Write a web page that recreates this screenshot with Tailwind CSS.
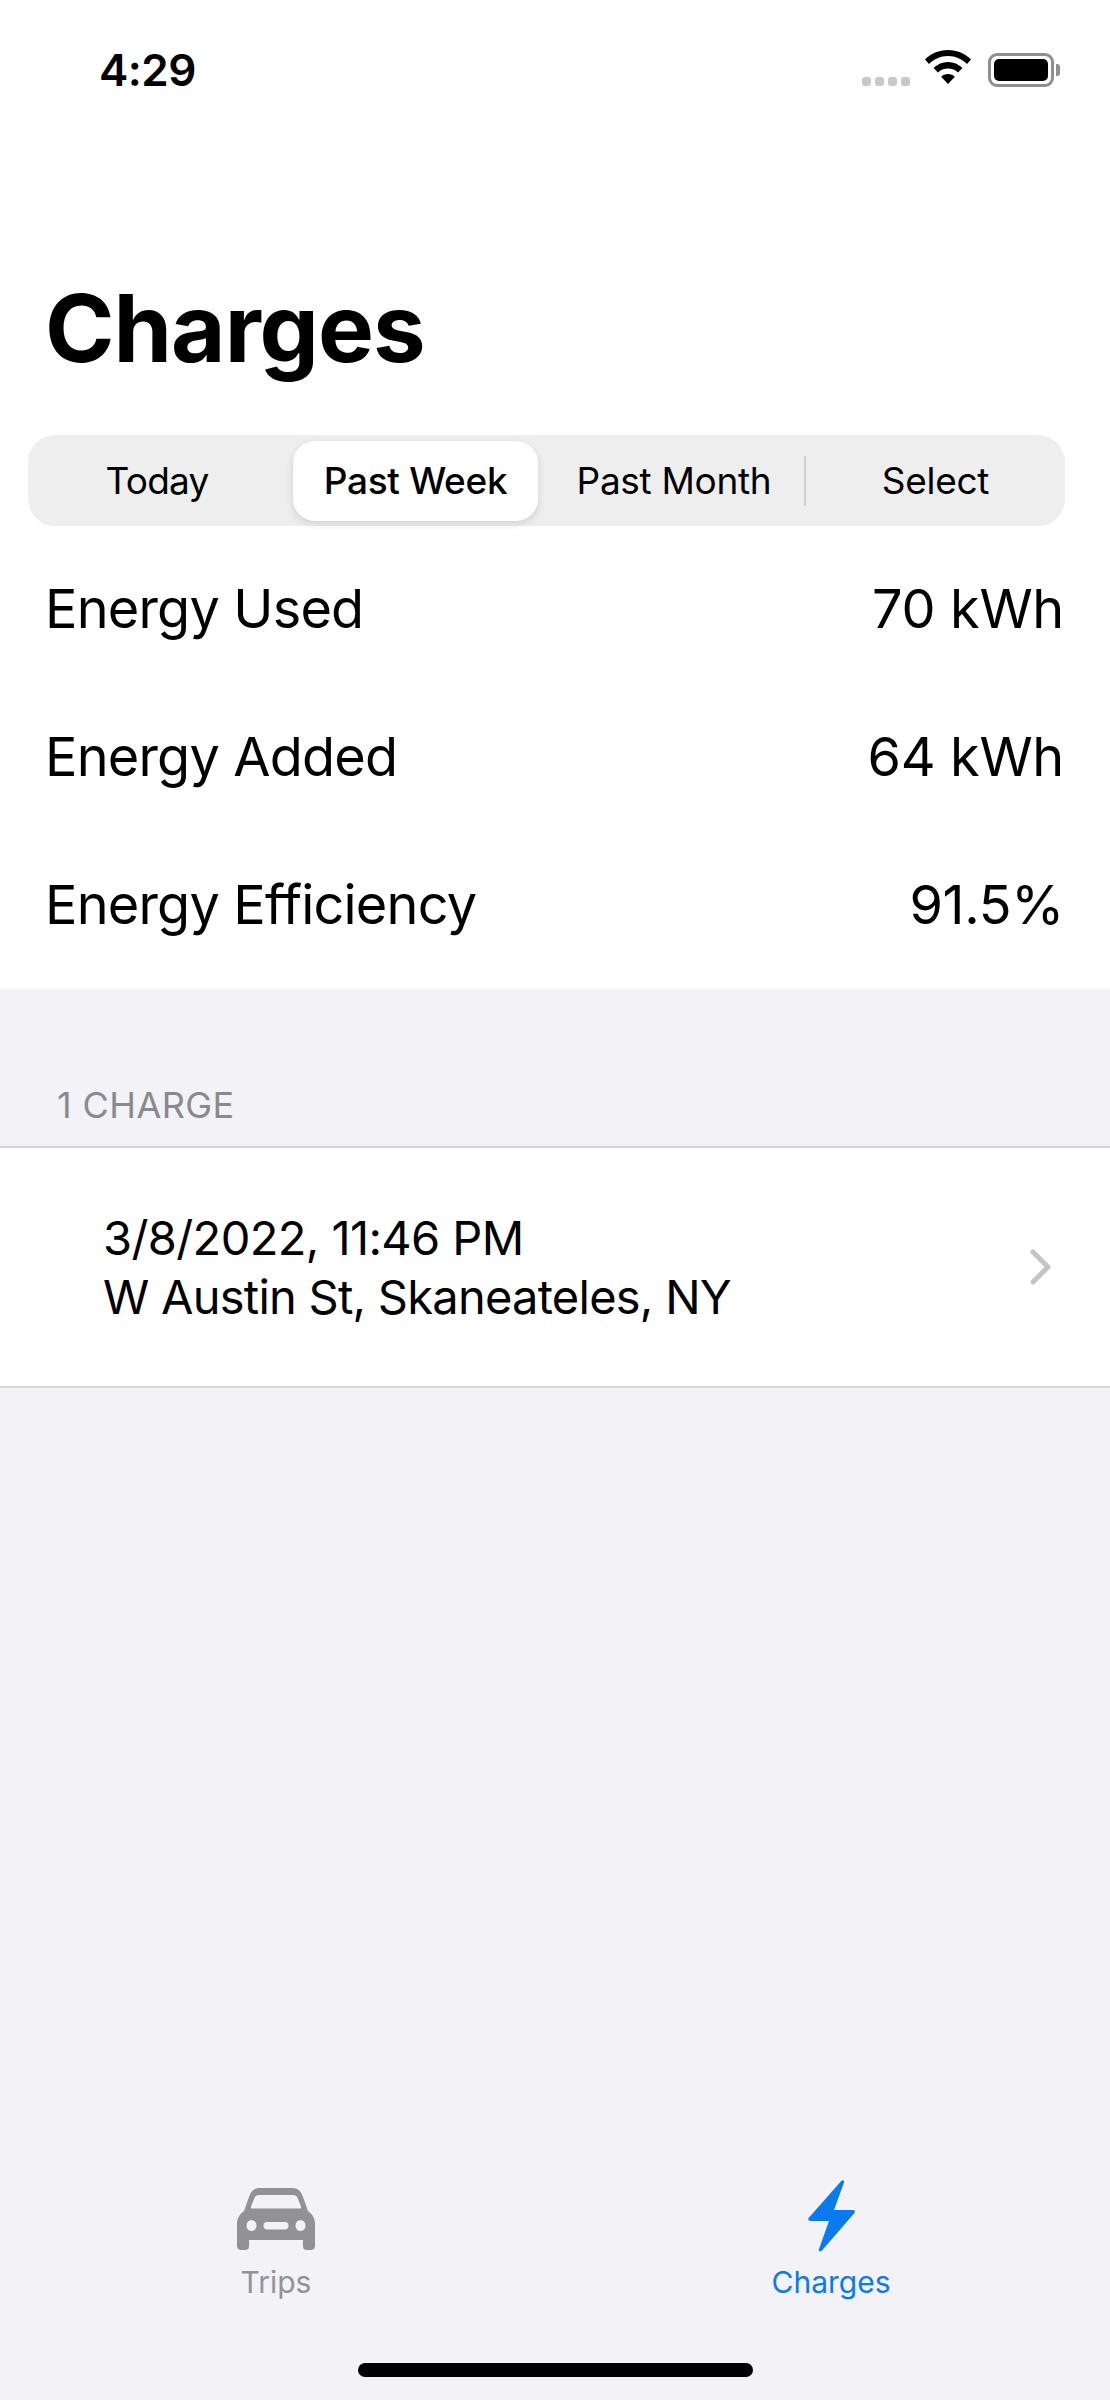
<!DOCTYPE html>
<html lang="en">
<head>
    <meta charset="UTF-8">
    <meta name="viewport" content="width=device-width, initial-scale=1.0">
    <title>Charges</title>
    <script src="https://cdn.jsdelivr.net/npm/@tailwindcss/browser@4"></script>
</head>
<body class="bg-white font-['Inter',sans-serif] text-black">
    <div class="w-[1110px] h-[2400px] flex flex-col overflow-hidden bg-[#f2f2f7]">
        <div class="bg-white">
            <!-- Status bar -->
            <div class="h-[140px] flex justify-between items-start pl-[99px] pr-[50px]">
                <span class="mt-[43px] text-[44px] leading-[54px] font-semibold tracking-[-0.5px]">4:29</span>
                <div class="mt-[50px] flex items-end">
                    <div class="flex gap-[4px] mb-[1px] mr-[14px]">
                        <span class="w-[9px] h-[9px] rounded-[3px] bg-[#c8c8c8]"></span>
                        <span class="w-[9px] h-[9px] rounded-[3px] bg-[#c8c8c8]"></span>
                        <span class="w-[9px] h-[9px] rounded-[3px] bg-[#c8c8c8]"></span>
                        <span class="w-[9px] h-[9px] rounded-[3px] bg-[#c8c8c8]"></span>
                    </div>
                    <svg class="w-[48px] h-[36px] mr-[16px] mb-[1px]" viewBox="0 0 48 36">
                        <path d="M24 0C15 0 7 3.500 1 9.500L5 14C10 9 16.500 6 24 6s14 3 19 8l4-4.500C41 3.500 33 0 24 0z"/>
                        <path d="M24 12c-5.500 0-10.500 2.200-14.500 6L14 22.500c2.600-2.600 6-4 10-4s7.400 1.400 10 4l4.500-4.500C34.500 14.200 29.500 12 24 12z"/>
                        <path d="M24 24c-2.800 0-5 1-6.800 2.800L24 34l6.800-7.200C29 25 26.800 24 24 24z"/>
                    </svg>
                    <div class="w-[66px] h-[34px] rounded-[9px] border-[3px] border-[#8f8f8f] p-[3px]">
                        <div class="w-full h-full rounded-[5px] bg-black"></div>
                    </div>
                    <span class="w-[4px] h-[12px] mb-[11px] ml-[2px] rounded-r-[3px] bg-[#8f8f8f]"></span>
                </div>
            </div>

            <h1 class="ml-[45px] mt-[138px] text-[94px] leading-[100px] font-bold tracking-[-1px]">Charges</h1>

            <!-- Range picker -->
            <div class="ml-[28px] mt-[57px] mr-[45px] h-[91px] rounded-[27px] bg-[#eeeeee] flex items-center text-[37px] tracking-[-0.3px]">
                <div class="w-[265px] pr-[7px] text-center tracking-[-0.8px]">Today</div>
                <div class="w-[245px] h-[80px] rounded-[22px] bg-white shadow-[0_3px_8px_rgba(0,0,0,0.12)] flex items-center justify-center font-medium">Past Week</div>
                <div class="w-[266px] pl-[6px] text-center">Past Month</div>
                <div class="w-[2px] h-[50px] bg-[#cfcfcf]"></div>
                <div class="flex-1 text-center">Select</div>
            </div>

            <!-- Summary -->
            <div class="pl-[45px] pr-[46px] pt-[8px] h-[463px] text-[54px]">
                <div class="h-[148px] flex items-center justify-between"><span class="tracking-[-0.8px]">Energy Used</span><span class="tracking-[-0.3px]">70 kWh</span></div>
                <div class="h-[148px] flex items-center justify-between"><span class="tracking-[-0.8px]">Energy Added</span><span class="tracking-[-0.3px]">64 kWh</span></div>
                <div class="h-[148px] flex items-center justify-between"><span class="tracking-[-0.8px]">Energy Efficiency</span><span class="tracking-[-0.3px]">91.5%</span></div>
            </div>
        </div>

        <!-- Charge list -->
        <div class="h-[157px] pl-[57px] pb-[19px] flex items-end text-[36px] leading-[44px] tracking-[0.4px] text-[#8a8a8e]">1 CHARGE</div>
        <div class="h-[242px] bg-white border-y-2 border-[#d4d4d6] flex items-center justify-between pl-[103px] pr-[58px]">
            <div class="text-[47px] leading-[59px] tracking-[-0.6px]">
                <div>3/8/2022, 11:46 PM</div>
                <div class="tracking-[-0.75px]">W Austin St, Skaneateles, NY</div>
            </div>
            <svg class="w-[22px] h-[36px]" viewBox="0 0 22 36" fill="none" stroke="#c4c4c7" stroke-width="5" stroke-linecap="round" stroke-linejoin="round"><path d="M3 3l15 15L3 33"/></svg>
        </div>

        <!-- Tab bar -->
        <div class="mt-auto h-[226px] flex flex-col">
            <div class="flex h-[130px] text-[30px] leading-[36px]">
                <div class="w-[552px] flex flex-col items-center text-[#929296]">
                    <svg class="w-[78px] h-[62px] mt-[14px]" viewBox="0 0 78 62" fill="#929296">
                        <path fill-rule="evenodd" d="M23 0H55C61 0 64 3 66 9L71 23C75 26 78 30 78 36V58C78 60.500 76 62 74 62H70C67 62 66 60.500 66 58V52H12V58C12 60.500 11 62 8 62H4C2 62 0 60.500 0 58V36C0 30 3 26 7 23L12 9C14 3 17 0 23 0ZM22 7C19 7 18 8.500 17 11L14 18.500C13.500 20 14 20.500 15.500 20.500H62.500C64 20.500 64.500 20 64 18.500L61 11C60 8.500 59 7 56 7ZM14.500 32A5 5.500 0 1 0 14.500 43A5 5.500 0 1 0 14.500 32ZM63.500 32A5 5.500 0 1 0 63.500 43A5 5.500 0 1 0 63.500 32ZM30 34C27.500 34 26.500 35.500 26.500 37.500S27.500 41.500 30 41.500H48C50.500 41.500 51.500 39.500 51.500 37.500S50.500 34 48 34Z"/>
                    </svg>
                    <span class="mt-[14px]">Trips</span>
                </div>
                <div class="w-[558px] flex flex-col items-center text-[#0a7aed]">
                    <svg class="w-[47px] h-[72px] mt-[6px]" viewBox="0 0 47 72" fill="#0a7aed">
                        <path d="M33.500 0.800C35 -0.500 36.500 0.500 36 2.500L26 30H45C47 30 47.500 32 46 33.500L14 70.500C12.500 72.300 10 71.500 11 69L21 41H2.500C0.500 41 -0.500 39 1 37.500L33.500 0.800Z"/>
                    </svg>
                    <span class="mt-[12px]">Charges</span>
                </div>
            </div>
            <div class="w-[395px] h-[14px] mt-[59px] mx-auto rounded-full bg-black"></div>
        </div>
    </div>
</body>
</html>
